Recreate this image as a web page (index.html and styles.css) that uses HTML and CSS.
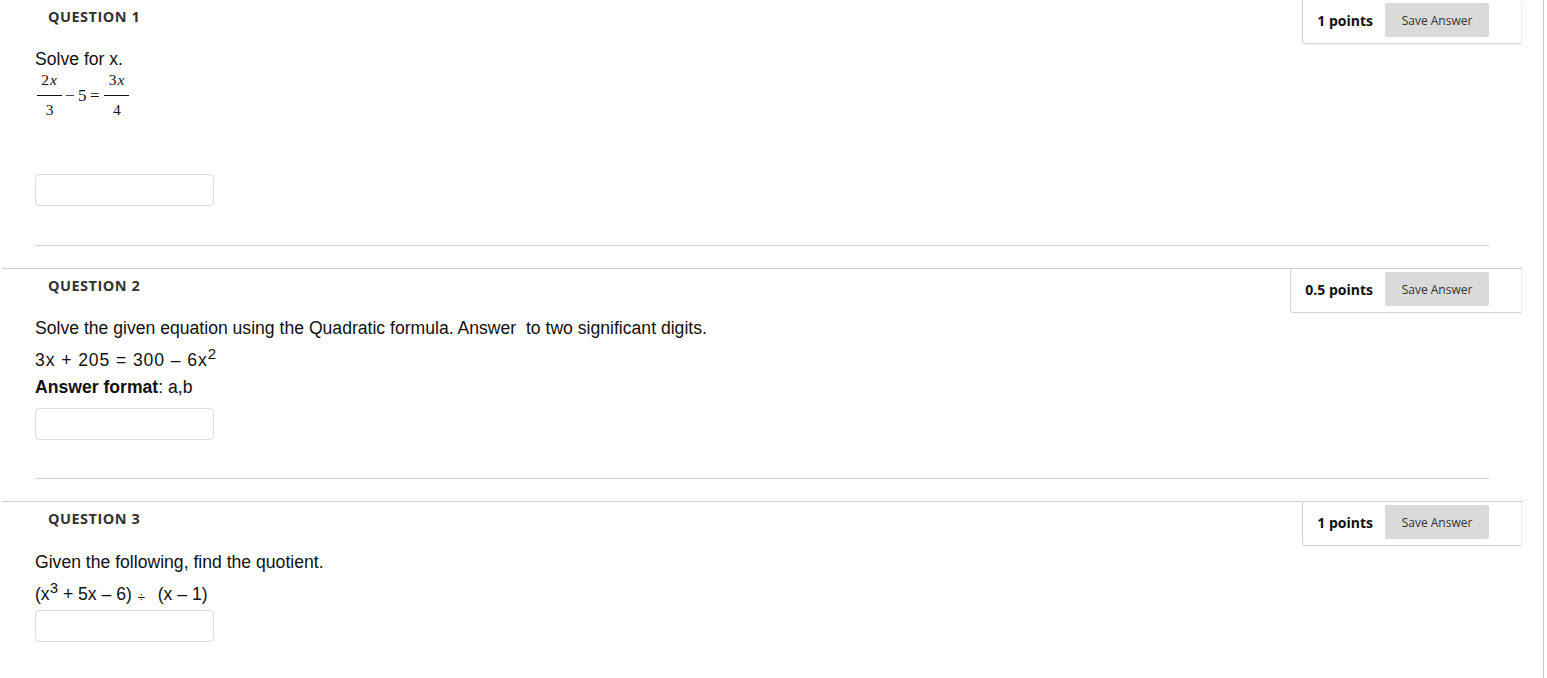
FILE: index.html
```html
<!DOCTYPE html>
<html>
<head>
<meta charset="utf-8">
<link rel="stylesheet" href="styles.css">
</head>
<body>
<div class="page">
  <ul class="questions">
    <li class="question">
      <div class="q-head">
        <h3 class="q-title">QUESTION 1</h3>
        <div class="points"><span class="pts">1 points</span><button class="save">Save Answer</button></div>
      </div>
      <div class="q-body">
        <p class="line">Solve for x.</p>
        <div class="math">
          <span class="frac"><span class="num">2<i>x</i></span><span class="den">3</span></span>
          <span class="op">&minus;&thinsp;5&thinsp;=</span>
          <span class="frac"><span class="num">3<i>x</i></span><span class="den">4</span></span>
        </div>
        <input class="answer answer-q1" type="text">
      </div>
      <hr class="sep">
    </li>
    <li class="question">
      <div class="q-head">
        <h3 class="q-title">QUESTION 2</h3>
        <div class="points"><span class="pts">0.5 points</span><button class="save">Save Answer</button></div>
      </div>
      <div class="q-body">
        <p class="line">Solve the given equation using the Quadratic formula. Answer&nbsp; to two significant digits.</p>
        <p class="line expr expr-wide">3x + 205 = 300 – 6x<sup>2</sup></p>
        <p class="line fmt"><b>Answer format</b>: a,b</p>
        <input class="answer answer-q2" type="text">
      </div>
      <hr class="sep sep-q2">
    </li>
    <li class="question">
      <div class="q-head">
        <h3 class="q-title">QUESTION 3</h3>
        <div class="points"><span class="pts">1 points</span><button class="save">Save Answer</button></div>
      </div>
      <div class="q-body q3">
        <p class="line">Given the following, find the quotient.</p>
        <p class="line expr">(x<sup>3</sup> + 5x – 6) <span class="div">÷</span> (x – 1)</p>
        <input class="answer answer-q3" type="text">
      </div>
    </li>
  </ul>
</div>
</body>
</html>
```

FILE: styles.css
```css
html, body {
  margin: 0;
  padding: 0;
  background: #fff;
}

.page {
  width: 1543px;
  height: 678px;
  border-right: 1px solid #c6c6c6;
  overflow: hidden;
  font-family: Arial, "Liberation Sans", sans-serif;
  color: #111;
}

.questions {
  list-style: none;
  margin: -1px 0 0 2px;
  padding: 0;
  width: 1520px;
}

.question {
  border-top: 1px solid #cfcfcf;
}

.q-head {
  display: flex;
  justify-content: space-between;
  align-items: flex-start;
}

.q-title {
  margin: 7px 0 0 46px;
  font-family: "Open Sans", sans-serif;
  font-weight: 700;
  font-size: 14.5px;
  line-height: 20px;
  color: #333;
  letter-spacing: 0.5px;
}

.points {
  display: flex;
  align-items: center;
  gap: 12px;
  padding: 3px 32px 6px 14px;
  border-left: 1px solid #d4d4d4;
  border-bottom: 1px solid #d4d4d4;
  border-right: 1px solid #eeeeee;
  border-bottom-left-radius: 4px;
  box-shadow: 0 1px 2px rgba(0,0,0,0.04);
}

.pts {
  font-family: "Open Sans", sans-serif;
  font-weight: 700;
  font-size: 14px;
  color: #111;
}

.save {
  width: 104px;
  height: 34px;
  border: none;
  border-radius: 2px;
  background: #dadada;
  font-family: "Open Sans", sans-serif;
  font-size: 12px;
  color: #333;
  padding: 0;
}

.q-body {
  padding: 5px 0 0 33px;
}

.q3 {
  padding-top: 6px;
}

.line {
  margin: 0;
  font-size: 17.6px;
  line-height: 20px;
}

.expr {
  margin-top: 12px;
}

.expr-wide {
  letter-spacing: 0.9px;
}

.fmt {
  margin-top: 7px;
}

.fmt b {
  font-weight: 700;
}

sup {
  font-size: 15px;
  line-height: 0;
  vertical-align: 7px;
}

.div {
  display: inline-block;
  font-size: 13px;
  vertical-align: -2px;
  margin: 0 8px 0 1px;
}

.math {
  display: flex;
  align-items: center;
  margin-top: 3px;
  font-family: "Liberation Serif", "Times New Roman", serif;
  font-size: 15.5px;
  color: #111;
}

.frac {
  display: inline-flex;
  flex-direction: column;
  align-items: center;
  width: 25px;
  margin-left: 2px;
}

.num {
  line-height: 16px;
  padding-bottom: 7px;
  border-bottom: 1px solid #111;
  width: 100%;
  text-align: center;
  letter-spacing: 1px;
}

.den {
  line-height: 16px;
  padding-top: 6px;
}

.op {
  margin: 2px 3px 0 3px;
  font-size: 17px;
}

.answer {
  display: block;
  width: 179px;
  height: 32px;
  box-sizing: border-box;
  border: 1px solid #dcdcdc;
  border-radius: 4px;
  margin: 0;
  padding: 0;
  background: #fff;
}

.answer-q1 { margin-top: 56px; }
.answer-q2 { margin-top: 11px; }
.answer-q3 { margin-top: 2px; }

.sep {
  margin: 39px 0 22px 33px;
  width: 1454px;
  height: 0;
  border: none;
  border-top: 1px solid #cfcfcf;
}

.sep-q2 {
  margin-top: 38px;
}
```
